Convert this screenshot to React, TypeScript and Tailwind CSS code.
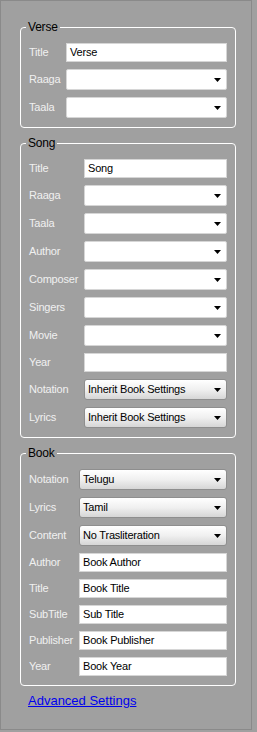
import React from "react";

const Arrow = () => (
  <svg width="7" height="4" viewBox="0 0 7 4" className="absolute right-[5px] top-1/2 -translate-y-1/2">
    <polygon points="0,0 7,0 3.5,4" fill="#000" />
  </svg>
);

type Row = { label: string; kind: "input" | "select" | "gselect"; value?: string };

const Field = ({ row }: { row: Row }) => {
  if (row.kind === "input") {
    return (
      <div className="h-[19px] bg-white border border-[#d6d6d6] pl-[3px] flex items-center text-black whitespace-nowrap">
        {row.value}
      </div>
    );
  }
  if (row.kind === "select") {
    return (
      <div className="relative h-[21px] bg-white border border-[#d6d6d6] rounded-[2px]">
        <Arrow />
      </div>
    );
  }
  return (
    <div className="relative h-[21px] rounded-[3px] border border-[#8e8e8e] bg-gradient-to-b from-[#ffffff] via-[#f0f0f0] to-[#d6d6d6] pl-[3px] flex items-center text-black whitespace-nowrap">
      {row.value}
      <Arrow />
    </div>
  );
};

const Group = ({ title, rows, cols, className }: { title: string; rows: Row[]; cols: string; className?: string }) => (
  <fieldset className={"w-[216px] border border-white rounded-[4px] " + (className ?? "")}>
    <legend className="ml-[5px] px-[2px] leading-[14px] text-[12px] text-black tracking-[-0.2px]">{title}</legend>
    <div className={"grid gap-x-[6px] gap-y-[7px] px-[8px] pt-[9px] pb-[9px] items-center " + cols}>
      {rows.map((r, i) => (
        <React.Fragment key={i}>
          <div className="text-[#f0f0f0] whitespace-nowrap">{r.label}</div>
          <Field row={r} />
        </React.Fragment>
      ))}
    </div>
  </fieldset>
);

export default function App() {
  const verse: Row[] = [
    { label: "Title", kind: "input", value: "Verse" },
    { label: "Raaga", kind: "select" },
    { label: "Taala", kind: "select" },
  ];
  const song: Row[] = [
    { label: "Title", kind: "input", value: "Song" },
    { label: "Raaga", kind: "select" },
    { label: "Taala", kind: "select" },
    { label: "Author", kind: "select" },
    { label: "Composer", kind: "select" },
    { label: "Singers", kind: "select" },
    { label: "Movie", kind: "select" },
    { label: "Year", kind: "input", value: "" },
    { label: "Notation", kind: "gselect", value: "Inherit Book Settings" },
    { label: "Lyrics", kind: "gselect", value: "Inherit Book Settings" },
  ];
  const book: Row[] = [
    { label: "Notation", kind: "gselect", value: "Telugu" },
    { label: "Lyrics", kind: "gselect", value: "Tamil" },
    { label: "Content", kind: "gselect", value: "No Trasliteration" },
    { label: "Author", kind: "input", value: "Book Author" },
    { label: "Title", kind: "input", value: "Book Title" },
    { label: "SubTitle", kind: "input", value: "Sub Title" },
    { label: "Publisher", kind: "input", value: "Book Publisher" },
    { label: "Year", kind: "input", value: "Book Year" },
  ];
  return (
    <div
      className="w-[257px] h-[732px] bg-[#a0a0a0] text-[11px] tracking-[-0.2px]"
      style={{ fontFamily: '"Liberation Sans", Arial, sans-serif' }}
    >
      <div className="w-[252px] h-[730px] border border-[#8a8a8a] pt-[19px] pl-[19px]">
        <Group title="Verse" rows={verse} cols="grid-cols-[31px_1fr]" />
        <Group title="Song" rows={song} cols="grid-cols-[49px_1fr]" className="mt-[8px]" />
        <Group title="Book" rows={book} cols="grid-cols-[44px_1fr]" className="mt-[8px]" />
        <div className="mt-[7px] ml-[8px] leading-[15px]">
          <a href="#" className="text-[13px] tracking-normal text-[#0000ee] underline">
            Advanced Settings
          </a>
        </div>
      </div>
    </div>
  );
}
